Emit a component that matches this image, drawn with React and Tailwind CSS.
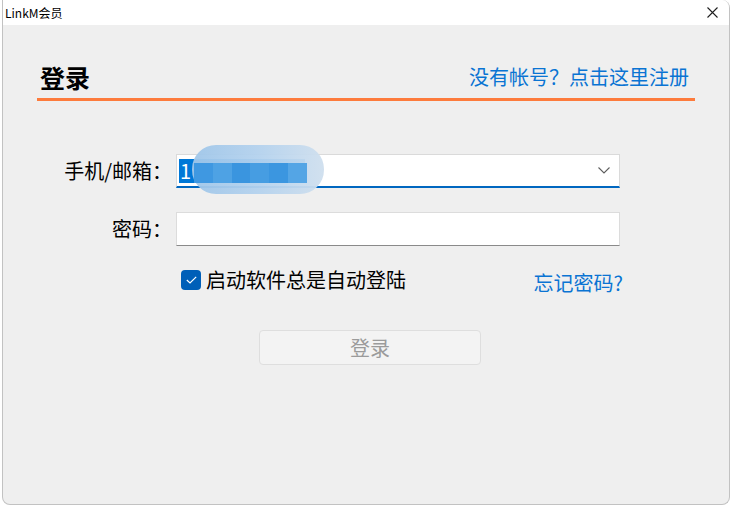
import { useState } from 'react';

const cjk = { fontFamily: '"Microsoft YaHei", "Noto Sans CJK SC", "Noto Sans", sans-serif' };

function Chevron() {
  return (
    <svg width="12" height="7" viewBox="0 0 12 7" fill="none">
      <polyline points="0.5,0.5 6,6 11.5,0.5" stroke="#5f5f5f" strokeWidth="1.1" />
    </svg>
  );
}

function CloseX() {
  return (
    <svg width="11" height="11" viewBox="0 0 11 11" fill="none">
      <path d="M0.5 0.5 L10.5 10.5 M10.5 0.5 L0.5 10.5" stroke="#1f1f1f" strokeWidth="1.1" />
    </svg>
  );
}

export default function App() {
  const [autoLogin, setAutoLogin] = useState(true);

  return (
    <div className="w-[732px] h-[507px] bg-white overflow-hidden" style={cjk}>
      {/* Window */}
      <div className="ml-[2px] w-[728px] h-[505px] border border-t-0 border-[#c2c2c2] rounded-b-[8px] rounded-tr-[8px] overflow-hidden flex flex-col bg-[#efefef]">
        {/* Title bar */}
        <div className="h-[25px] bg-white flex items-center justify-between pl-[2px] pr-[11px] shrink-0">
          <span className="text-[12px] leading-none text-black">LinkM会员</span>
          <CloseX />
        </div>

        {/* Header */}
        <div className="mt-[35px] ml-[34px] w-[658px]">
          <div className="h-[38px] flex items-center justify-between pb-[4px] pl-[3px] pr-[6px]">
            <span className="text-[25px] font-bold text-black leading-none">登录</span>
            <a className="text-[20px] text-[#0a74d3] leading-none cursor-pointer">没有帐号？点击这里注册</a>
          </div>
          <div className="h-[3px] bg-[#fd7b3c]" />
        </div>

        {/* Form */}
        <div className="mt-[53px] flex flex-col gap-[24px]">
          <div className="flex items-center">
            <label className="w-[173px] pr-[4px] text-right text-[20px] text-black leading-none">手机/邮箱：</label>
            <div className="relative w-[444px] h-[34px] bg-white border border-[#dadada] border-b-2 border-b-[#0067c0] flex items-center pl-[2px] pr-[9px]">
              <span className="h-[24px] w-[126px] bg-[#0078d7] text-white text-[20px] leading-[24px] pl-[1px]">1</span>
              <span className="ml-auto"><Chevron /></span>
              {/* blurred-out account */}
              <div className="absolute left-[15px] top-[-10px] w-[132px] h-[49px] rounded-[24px] bg-gradient-to-r from-[#9fc6e9] via-[#b4d2ee] to-[#cfdfee] opacity-95" />
              <div className="absolute left-[17px] top-[8px] h-[20px] w-[113px] flex">
                <div className="flex-1 bg-[#3f98e1]" />
                <div className="flex-1 bg-[#4ea2e4]" />
                <div className="flex-1 bg-[#3a95df]" />
                <div className="flex-1 bg-[#469de2]" />
                <div className="flex-1 bg-[#3b96e0]" />
                <div className="flex-1 bg-[#54a5e5]" />
              </div>
            </div>
          </div>

          <div className="flex items-center">
            <label className="w-[173px] pr-[4px] text-right text-[20px] text-black leading-none">密码：</label>
            <input
              type="password"
              className="w-[444px] h-[34px] bg-white border border-[#dcdcdc] border-b-[#8a8a8a] outline-none px-2"
            />
          </div>
        </div>

        {/* Options */}
        <div className="mt-[24px] h-[26px] flex items-start">
          <div className="ml-[178px] flex items-center gap-[5px] cursor-pointer" onClick={() => setAutoLogin(!autoLogin)}>
            <span className="w-[20px] h-[20px] rounded-[4px] bg-[#005fb8] flex items-center justify-center">
              {autoLogin && (
                <svg width="11" height="8" viewBox="0 0 11 8" fill="none">
                  <polyline points="0.8,4 4,7 10.2,0.8" stroke="white" strokeWidth="1.2" />
                </svg>
              )}
            </span>
            <span className="text-[20px] text-black leading-none">启动软件总是自动登陆</span>
          </div>
          <a className="ml-auto mr-[106px] mt-[3px] text-[20px] text-[#0a74d3] leading-none cursor-pointer">忘记密码?</a>
        </div>

        {/* Submit */}
        <div className="mt-[34px] ml-[256px]">
          <button className="w-[222px] h-[35px] rounded-[4px] border border-[#dedede] bg-[#f3f3f3] text-[20px] text-[#9b9b9b] leading-none">
            登录
          </button>
        </div>
      </div>
    </div>
  );
}
